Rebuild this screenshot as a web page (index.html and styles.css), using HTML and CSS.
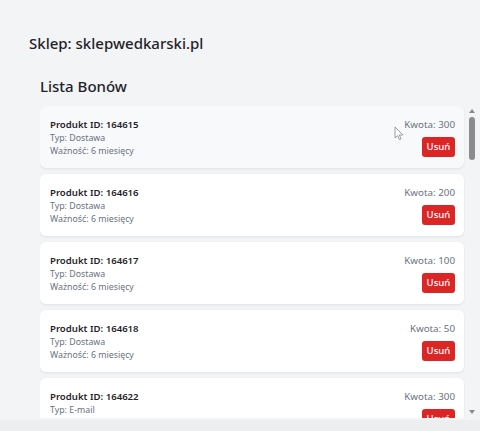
FILE: index.html
```html
<!DOCTYPE html>
<html lang="pl">
<head>
<meta charset="utf-8">
<title>Lista Bonów</title>
<link rel="stylesheet" href="styles.css">
</head>
<body>
<div class="page">
  <h1 class="shop">Sklep: sklepwedkarski.pl</h1>
  <section class="section">
    <h2 class="section-title">Lista Bonów</h2>
    <div class="list-wrap">
      <div class="list">
        <div class="card card-hover">
          <div class="info">
            <div class="pid">Produkt ID: 164615</div>
            <div class="meta">Typ: Dostawa</div>
            <div class="meta">Ważność: 6 miesięcy</div>
          </div>
          <div class="side">
            <div class="amount">Kwota: 300</div>
            <button class="btn">Usuń</button>
          </div>
          <svg class="cursor" width="10" height="15" viewBox="0 0 10 15"><path d="M1 1 L1 12 L3.6 9.6 L5.4 13.6 L7 12.9 L5.3 9 L8.8 9 Z" fill="#fff" stroke="#8a8f96" stroke-width="0.9" stroke-linejoin="round"/></svg>
        </div>
        <div class="card">
          <div class="info">
            <div class="pid">Produkt ID: 164616</div>
            <div class="meta">Typ: Dostawa</div>
            <div class="meta">Ważność: 6 miesięcy</div>
          </div>
          <div class="side">
            <div class="amount">Kwota: 200</div>
            <button class="btn">Usuń</button>
          </div>
        </div>
        <div class="card">
          <div class="info">
            <div class="pid">Produkt ID: 164617</div>
            <div class="meta">Typ: Dostawa</div>
            <div class="meta">Ważność: 6 miesięcy</div>
          </div>
          <div class="side">
            <div class="amount">Kwota: 100</div>
            <button class="btn">Usuń</button>
          </div>
        </div>
        <div class="card">
          <div class="info">
            <div class="pid">Produkt ID: 164618</div>
            <div class="meta">Typ: Dostawa</div>
            <div class="meta">Ważność: 6 miesięcy</div>
          </div>
          <div class="side">
            <div class="amount">Kwota: 50</div>
            <button class="btn">Usuń</button>
          </div>
        </div>
        <div class="card">
          <div class="info">
            <div class="pid">Produkt ID: 164622</div>
            <div class="meta">Typ: E-mail</div>
            <div class="meta">Ważność: 6 miesięcy</div>
          </div>
          <div class="side">
            <div class="amount">Kwota: 300</div>
            <button class="btn">Usuń</button>
          </div>
        </div>
      </div>
      <div class="scrollbar">
        <span class="arrow arrow-up"></span>
        <span class="thumb"></span>
        <span class="track"></span>
        <span class="arrow arrow-down"></span>
      </div>
    </div>
  </section>
</div>
</body>
</html>
```

FILE: styles.css
```css
html, body {
  margin: 0;
  padding: 0;
  background: #eceef0;
}
body {
  font-family: "Noto Sans", "Open Sans", sans-serif;
  color: #1f2328;
}
.page {
  height: 420px;
  box-sizing: border-box;
  padding: 32px 0 0 29px;
  background: #f3f4f6;
}
.shop {
  margin: 0;
  font-size: 15px;
  line-height: 22px;
  font-weight: 500;
  color: #1f2328;
}
.section {
  margin: 21px 0 0 11px;
}
.section-title {
  margin: 0 0 9px 0;
  font-size: 15px;
  line-height: 22px;
  font-weight: 500;
  color: #1f2328;
}
.list-wrap {
  display: flex;
  align-items: stretch;
}
.list {
  width: 425px;
  height: 312px;
  overflow: hidden;
  display: flex;
  flex-direction: column;
  gap: 6px;
}
.card {
  position: relative;
  flex: none;
  display: flex;
  justify-content: space-between;
  height: 62px;
  box-sizing: border-box;
  padding: 12px 9px 0 10px;
  margin-right: 1px;
  background: #ffffff;
  border-radius: 6px;
  box-shadow: 0 1px 3px rgba(0, 0, 0, 0.08);
}
.card-hover {
  background: #f8f9fb;
}
.info {
  display: flex;
  flex-direction: column;
}
.pid {
  font-size: 9.6px;
  line-height: 14px;
  font-weight: 600;
  color: #1f2328;
}
.meta {
  font-size: 8.8px;
  line-height: 13px;
  color: #6b7280;
}
.side {
  display: flex;
  flex-direction: column;
  align-items: flex-end;
}
.amount {
  font-size: 9.8px;
  line-height: 14px;
  color: #6b7280;
}
.btn {
  margin-top: 5px;
  height: 20px;
  width: 33px;
  padding: 0;
  border: none;
  border-radius: 3px;
  background: #dc2626;
  color: #ffffff;
  font-family: inherit;
  font-size: 9.6px;
  font-weight: 500;
  line-height: 20px;
  text-align: center;
}
.cursor {
  position: absolute;
  left: 354px;
  top: 20px;
}
.scrollbar {
  width: 14px;
  height: 312px;
  display: flex;
  flex-direction: column;
  align-items: center;
}
.arrow {
  width: 0;
  height: 0;
  border-left: 3.5px solid transparent;
  border-right: 3.5px solid transparent;
}
.arrow-up {
  margin-top: 3px;
  border-bottom: 4px solid #8a8a8a;
}
.arrow-down {
  margin-bottom: 4px;
  border-top: 4px solid #8a8a8a;
}
.thumb {
  margin-top: 4px;
  width: 6px;
  height: 43px;
  border-radius: 3px;
  background: #8c8c8c;
}
.track {
  flex: 1;
}
```
